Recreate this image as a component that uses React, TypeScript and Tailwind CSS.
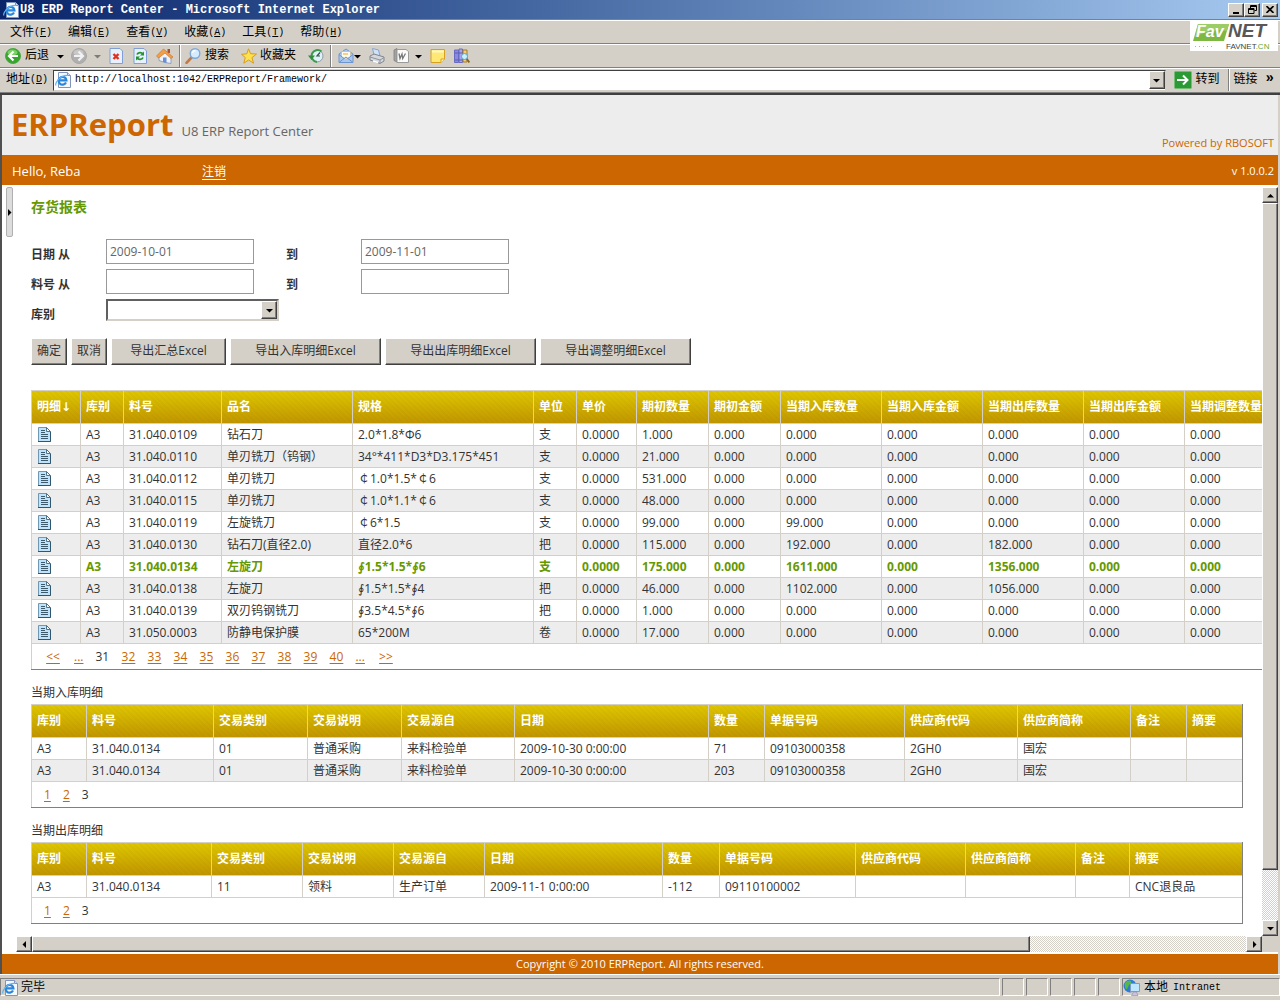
import React, { useState } from 'react';

interface Column {
  title: string;
  width: string;
}

const stockColumns: Column[] = [
  { title: '明细↓', width: 'w-[49px]' },
  { title: '库别', width: 'w-[43px]' },
  { title: '料号', width: 'w-[98px]' },
  { title: '品名', width: 'w-[131px]' },
  { title: '规格', width: 'w-[181px]' },
  { title: '单位', width: 'w-[43px]' },
  { title: '单价', width: 'w-[60px]' },
  { title: '期初数量', width: 'w-[72px]' },
  { title: '期初金额', width: 'w-[72px]' },
  { title: '当期入库数量', width: 'w-[101px]' },
  { title: '当期入库金额', width: 'w-[101px]' },
  { title: '当期出库数量', width: 'w-[101px]' },
  { title: '当期出库金额', width: 'w-[101px]' },
  { title: '当期调整数量', width: 'w-[101px]' },
];

const stockRows = [
  ['A3', '31.040.0109', '钻石刀', '2.0*1.8*Φ6', '支', '0.0000', '1.000', '0.000', '0.000', '0.000', '0.000', '0.000', '0.000'],
  ['A3', '31.040.0110', '单刃铣刀（钨钢）', '34°*411*D3*D3.175*451', '支', '0.0000', '21.000', '0.000', '0.000', '0.000', '0.000', '0.000', '0.000'],
  ['A3', '31.040.0112', '单刃铣刀', '￠1.0*1.5*￠6', '支', '0.0000', '531.000', '0.000', '0.000', '0.000', '0.000', '0.000', '0.000'],
  ['A3', '31.040.0115', '单刃铣刀', '￠1.0*1.1*￠6', '支', '0.0000', '48.000', '0.000', '0.000', '0.000', '0.000', '0.000', '0.000'],
  ['A3', '31.040.0119', '左旋铣刀', '￠6*1.5', '支', '0.0000', '99.000', '0.000', '99.000', '0.000', '0.000', '0.000', '0.000'],
  ['A3', '31.040.0130', '钻石刀(直径2.0)', '直径2.0*6', '把', '0.0000', '115.000', '0.000', '192.000', '0.000', '182.000', '0.000', '0.000'],
  ['A3', '31.040.0134', '左旋刀', '∮1.5*1.5*∮6', '支', '0.0000', '175.000', '0.000', '1611.000', '0.000', '1356.000', '0.000', '0.000'],
  ['A3', '31.040.0138', '左旋刀', '∮1.5*1.5*∮4', '把', '0.0000', '46.000', '0.000', '1102.000', '0.000', '1056.000', '0.000', '0.000'],
  ['A3', '31.040.0139', '双刃钨钢铣刀', '∮3.5*4.5*∮6', '把', '0.0000', '1.000', '0.000', '0.000', '0.000', '0.000', '0.000', '0.000'],
  ['A3', '31.050.0003', '防静电保护膜', '65*200M', '卷', '0.0000', '17.000', '0.000', '0.000', '0.000', '0.000', '0.000', '0.000'],
];

const inColumns: Column[] = [
  { title: '库别', width: 'w-[55px]' },
  { title: '料号', width: 'w-[127px]' },
  { title: '交易类别', width: 'w-[94px]' },
  { title: '交易说明', width: 'w-[94px]' },
  { title: '交易源自', width: 'w-[113px]' },
  { title: '日期', width: 'w-[194px]' },
  { title: '数量', width: 'w-[56px]' },
  { title: '单据号码', width: 'w-[140px]' },
  { title: '供应商代码', width: 'w-[113px]' },
  { title: '供应商简称', width: 'w-[113px]' },
  { title: '备注', width: 'w-[56px]' },
  { title: '摘要', width: 'w-auto' },
];

const inRows = [
  ['A3', '31.040.0134', '01', '普通采购', '来料检验单', '2009-10-30 0:00:00', '71', '09103000358', '2GH0', '国宏', '', ''],
  ['A3', '31.040.0134', '01', '普通采购', '来料检验单', '2009-10-30 0:00:00', '203', '09103000358', '2GH0', '国宏', '', ''],
];

const outColumns: Column[] = [
  { title: '库别', width: 'w-[55px]' },
  { title: '料号', width: 'w-[125px]' },
  { title: '交易类别', width: 'w-[91px]' },
  { title: '交易说明', width: 'w-[91px]' },
  { title: '交易源自', width: 'w-[91px]' },
  { title: '日期', width: 'w-[178px]' },
  { title: '数量', width: 'w-[57px]' },
  { title: '单据号码', width: 'w-[136px]' },
  { title: '供应商代码', width: 'w-[110px]' },
  { title: '供应商简称', width: 'w-[110px]' },
  { title: '备注', width: 'w-[54px]' },
  { title: '摘要', width: 'w-auto' },
];

const outRows = [
  ['A3', '31.040.0134', '11', '领料', '生产订单', '2009-11-1 0:00:00', '-112', '09110100002', '', '', '', 'CNC退良品'],
];

const menus = [
  ['文件', 'F'],
  ['编辑', 'E'],
  ['查看', 'V'],
  ['收藏', 'A'],
  ['工具', 'T'],
  ['帮助', 'H'],
];

/* ---------- icons ---------- */

function IeIcon() {
  return (
    <svg width="16" height="16" viewBox="0 0 16 16" className="shrink-0">
      <path d="M3.5.5h9l3 3v12h-12z" fill="#f4f8ff" stroke="#8094bd" />
      <path d="M12.500 .5v3h3" fill="#cfdcf5" stroke="#8094bd" />
      <path d="M11 10.500A3.900 3.900 0 1 1 11.400 8.300H4" fill="none" stroke="#2b86d9" strokeWidth="2.200" />
      <path d="M1 13.500C-.5 11 5 3.500 12 3.300" fill="none" stroke="#5fb4f0" strokeWidth="1.200" />
    </svg>
  );
}

function BackIcon() {
  return (
    <svg width="16" height="16" viewBox="0 0 16 16" className="shrink-0">
      <circle cx="8" cy="8" r="7.500" fill="#35a52b" stroke="#4aa845" />
      <ellipse cx="7.500" cy="4.500" rx="5" ry="3" fill="#7cd066" />
      <path d="M8.500 3.500L4 8l4.500 4.500M4.500 8H13" fill="none" stroke="#fff" strokeWidth="2.200" />
    </svg>
  );
}

function ForwardIcon() {
  return (
    <svg width="16" height="16" viewBox="0 0 16 16" className="shrink-0">
      <circle cx="8" cy="8" r="7.500" fill="#b0b0b0" stroke="#a6a6a6" />
      <ellipse cx="7.500" cy="4.500" rx="5" ry="3" fill="#c8c8c8" />
      <path d="M7.500 3.500L12 8l-4.500 4.500M11.500 8H3" fill="none" stroke="#f2f2f2" strokeWidth="2.200" />
    </svg>
  );
}

function StopIcon() {
  return (
    <svg width="16" height="16" viewBox="0 0 16 16" className="shrink-0">
      <path d="M2 .5h10l2.500 2.500v12.500H2z" fill="#e6f0ff" stroke="#7f9fd6" />
      <path d="M5.500 6l5 5M10.500 6l-5 5" stroke="#e0301e" strokeWidth="2.400" />
    </svg>
  );
}

function RefreshIcon() {
  return (
    <svg width="16" height="16" viewBox="0 0 16 16" className="shrink-0">
      <path d="M2 .5h10l2.500 2.500v12.500H2z" fill="#e6f0ff" stroke="#7f9fd6" />
      <path d="M5 6.500C6 4 9.500 4 11 6M11 9.500c-1 2.500-4.500 2.500-6 .5" fill="none" stroke="#23932b" strokeWidth="1.800" />
      <path d="M12 3.500v4H8zM4 12.500v-4h4z" fill="#23932b" />
    </svg>
  );
}

function HomeIcon() {
  return (
    <svg width="18" height="16" viewBox="0 0 18 16" className="shrink-0">
      <path d="M11.500 1h2.500v4h-2.500z" fill="#b0502a" />
      <path d="M3 7.500L9 3l6 5v7.500l-6-1-6-2z" fill="#eef3fb" stroke="#8ba0c2" />
      <path d="M.5 8L7.500 1l9.500 8-2 1.500L9 5l-6.500 5z" fill="#f0a04b" stroke="#cf7526" strokeWidth=".7" />
      <path d="M7 9.500h3.500V15L7 14z" fill="#6a8fd0" />
    </svg>
  );
}

function SearchIcon() {
  return (
    <svg width="16" height="16" viewBox="0 0 16 16" className="shrink-0">
      <path d="M6.500 9.500L1.500 14.800" stroke="#c07a43" strokeWidth="2.600" strokeLinecap="round" />
      <circle cx="10" cy="5.500" r="4.800" fill="#d5ecff" stroke="#7fa9da" strokeWidth="1.400" />
      <path d="M7.500 5a3 3 0 0 1 3-2.500" stroke="#fff" strokeWidth="1.300" fill="none" />
    </svg>
  );
}

function StarIcon() {
  return (
    <svg width="16" height="16" viewBox="0 0 16 16" className="shrink-0">
      <path d="M7.500.8l2 4.900 6 .3-4.600 3.700 1.700 5.500-5-3.200-4.800 3.200 1.500-5.600L.5 6.300l5.300-.5z" fill="#ffe14d" stroke="#d79c1c" />
    </svg>
  );
}

function HistoryIcon() {
  return (
    <svg width="16" height="16" viewBox="0 0 16 16" className="shrink-0">
      <circle cx="9" cy="8" r="6" fill="#dff0f7" stroke="#8d9ea6" />
      <path d="M13.500 3.500A6 6 0 1 0 9 14" fill="none" stroke="#3a9b4a" strokeWidth="2" />
      <path d="M0 7.500h7L3.500 12z" fill="#2d8f3e" />
      <path d="M12 4.500L9 8h3" fill="none" stroke="#33554a" strokeWidth="1.200" />
    </svg>
  );
}

function MailIcon() {
  return (
    <svg width="16" height="16" viewBox="0 0 16 16" className="shrink-0">
      <path d="M1 6l7-5 7 5v8.500H1z" fill="#a9c8f0" stroke="#6e95cd" />
      <path d="M3.500 3.500h9V9L8 11 3.500 9z" fill="#fffbe8" stroke="#c6b89a" strokeWidth=".7" />
      <path d="M1 14.500L8 9l7 5.500M1 6.500l5 4M15 6.500l-5 4" fill="none" stroke="#6e95cd" />
      <path d="M5 6h5" stroke="#e8a53a" />
    </svg>
  );
}

function PrintIcon() {
  return (
    <svg width="16" height="16" viewBox="0 0 16 16" className="shrink-0">
      <path d="M3.500.5l6 1.500L11 8 5 7z" fill="#cfe2fa" stroke="#87a4cb" />
      <path d="M1 8l4-2 10 3v4l-4 2.500L1 12z" fill="#d4d7dc" stroke="#80868f" />
      <path d="M1 9l10 3 4-2.500M11 12v3" fill="none" stroke="#8d939c" />
      <path d="M4 13l5 1.500" stroke="#fff" strokeWidth="1.500" />
    </svg>
  );
}

function WordIcon() {
  return (
    <svg width="16" height="16" viewBox="0 0 16 16" className="shrink-0">
      <path d="M1 2l3-1.500V14L1 12.500z" fill="#a3a3a3" stroke="#777" strokeWidth=".7" />
      <path d="M4 1.500h9l2.500 2v11H4z" fill="#fbfbfb" stroke="#9b9b9b" />
      <path d="M6 5.500l1 5 2-4.500.7 4.500 2.800-5" fill="none" stroke="#777" strokeWidth="1.300" />
    </svg>
  );
}

function NoteIcon() {
  return (
    <svg width="16" height="16" viewBox="0 0 16 16" className="shrink-0">
      <path d="M1 1.500h13.500V11L11 14.500H1z" fill="#ffe873" stroke="#d6a021" />
      <path d="M14.500 11H11v3.500" fill="#fff6bf" stroke="#d6a021" />
      <path d="M2 3.500h12" stroke="#fff8cc" strokeWidth="2" />
    </svg>
  );
}

function BooksIcon() {
  return (
    <svg width="16" height="16" viewBox="0 0 16 16" className="shrink-0">
      <path d="M.5 2h4v12.500h-4z" fill="#8a8ae0" stroke="#6a6ac0" />
      <path d="M5 1h3.500v13.500H5z" fill="#a4a4ea" stroke="#6a6ac0" />
      <path d="M1 5h7M1 12h7" stroke="#5c5cb4" />
      <path d="M9 2h4v12H9z" fill="#f1cf77" stroke="#a27b2b" />
      <circle cx="10.500" cy="8.500" r="3" fill="#c9efff" stroke="#5b9ec5" />
      <path d="M12.800 11l2.500 3.500" stroke="#8b6420" strokeWidth="2" />
    </svg>
  );
}

function GoIcon() {
  return (
    <svg width="18" height="18" viewBox="0 0 18 18" className="shrink-0">
      <rect x=".5" y=".5" width="17" height="17" rx="1" fill="#2b9a35" stroke="#76bd74" />
      <path d="M3 9h10M9 4.500L13.500 9 9 13.500" fill="none" stroke="#fff" strokeWidth="2" />
    </svg>
  );
}

function NetworkIcon() {
  return (
    <svg width="18" height="18" viewBox="0 0 18 18" className="shrink-0">
      <circle cx="7" cy="7" r="6.500" fill="#2f7bd6" />
      <path d="M2 4c2-3 5-3 6-2s-1 3-2 4-1 3-2 4-3-3-2-6z" fill="#55b948" />
      <path d="M7.500 4.500h9v8h-9z" fill="#bfe6ff" stroke="#7d9cc4" />
      <path d="M10.500 13h3l1.500 3.500H8.500z" fill="#c9c3df" stroke="#8c86a8" strokeWidth=".6" />
    </svg>
  );
}

function DocIcon() {
  return (
    <svg width="15" height="15" viewBox="0 0 15 15" className="block">
      <path d="M1.500.5h8l4 4v10h-12z" fill="#bfe3fb" stroke="#6f98b3" />
      <path d="M9.500.5v4h4z" fill="#f2faff" stroke="#4f7388" />
      <path d="M13.500 5v9.500H1" fill="none" stroke="#2f5770" />
      <path d="M4 3.500h4M4 5.500h4M4 7.500h7M4 9.500h7M4 11.500h7" stroke="#3c5a6c" />
    </svg>
  );
}

function Triangle({ dir }: { dir: 'up' | 'down' | 'left' | 'right' }) {
  const paths = { down: 'M0 2h7L3.500 5.500z', up: 'M0 5.500h7L3.500 2z', left: 'M5 0v7L1.500 3.500z', right: 'M2 0v7l3.500-3.500z' };
  return (
    <svg width="7" height="7" viewBox="0 0 7 7" className="shrink-0">
      <path d={paths[dir]} fill="#000" />
    </svg>
  );
}

function FavnetLogo() {
  return (
    <svg width="90" height="31" viewBox="0 0 90 31" className="absolute top-[20px] right-0">
      <rect width="88" height="31" fill="#fff" />
      <path d="M8 4h31l-5 17H3z" fill="#7db843" />
      <path d="M8 4h31l-2 7C25 9 15 12 5 17z" fill="#9ccc66" />
      <text x="6" y="17" fontFamily="Liberation Sans, sans-serif" fontSize="16" fontWeight="bold" fontStyle="italic" fill="#fff">Fav</text>
      <text x="38" y="17" fontFamily="Liberation Sans, sans-serif" fontSize="19" fontWeight="bold" fontStyle="italic" fill="#585858">NET</text>
      <path d="M5 26.500h20" stroke="#9ccc66" strokeDasharray="1 3" />
      <text x="36" y="29" fontFamily="Liberation Sans, sans-serif" fontSize="8" fill="#444">
        FAVNET<tspan fill="#6aa82e">.CN</tspan>
      </text>
    </svg>
  );
}

/* ---------- small parts ---------- */

const raised = 'border border-t-white border-l-white border-r-[#404040] border-b-[#404040] bg-[#d4d0c8] shadow-[inset_-1px_-1px_0_#808080]';
const track = 'bg-[conic-gradient(#fff_25%,#d4d0c8_0_50%,#fff_0_75%,#d4d0c8_0)] bg-[length:2px_2px]';

function Separator() {
  return <span className="h-[22px] w-[2px] border-l border-[#808080] border-r border-r-white" />;
}

function ScrollButton({ dir }: { dir: 'up' | 'down' | 'left' | 'right' }) {
  return (
    <button aria-label={`scroll ${dir}`} className={`flex size-4 shrink-0 items-center justify-center ${raised}`}>
      <Triangle dir={dir} />
    </button>
  );
}

function Pager({ pages, current }: { pages: string[]; current: string }) {
  const pageWidth = (page: string) => {
    if (page === '<<' || page === '>>') return 'w-[18px]';
    return page.length === 2 ? 'w-[14px]' : '';
  };

  return (
    <div className="flex h-[25px] items-center gap-3 pl-3 leading-4">
      {pages.map((page, i) =>
        page === current ? (
          <span key={i} className={pageWidth(page)}>{page}</span>
        ) : (
          <a key={i} href="#" className={`text-center text-[#cc6600] underline underline-offset-2 ${pageWidth(page)}`}>
            {page}
          </a>
        )
      )}
    </div>
  );
}

interface GridProps {
  columns: Column[];
  rows: React.ReactNode[][];
  pages: string[];
  current: string;
  selected?: number;
  className: string;
}

function DataGrid({ columns, rows, pages, current, selected, className }: GridProps) {
  return (
    <table className={`table-fixed border-separate border-spacing-0 border-r border-b border-[#808080] ${className}`}>
      <thead>
        <tr className="h-[33px] bg-[repeating-linear-gradient(45deg,transparent_0_2px,rgba(120,80,0,0.04)_2px_4px),linear-gradient(#e0c800,#c09600)] text-white">
          {columns.map((col) => (
            <th key={col.title} className={`overflow-hidden border-t border-l border-[#d4d0c8] px-[5px] py-0 text-left leading-5 font-bold whitespace-nowrap ${col.width}`}>
              {col.title}
            </th>
          ))}
        </tr>
      </thead>
      <tbody>
        {rows.map((row, i) => (
          <tr key={i} className={`h-[22px] ${i % 2 ? 'bg-[#ededed]' : 'bg-white'} ${i === selected ? 'font-bold text-[#669900]' : ''}`}>
            {row.map((cell, j) => (
              <td key={j} className="border-t border-l border-[#d4d0c8] px-[5px] py-0 leading-5 whitespace-nowrap">
                {cell}
              </td>
            ))}
          </tr>
        ))}
        <tr>
          <td colSpan={columns.length} className="border-t border-l border-[#d4d0c8] p-0">
            <Pager pages={pages} current={current} />
          </td>
        </tr>
      </tbody>
    </table>
  );
}

/* ---------- browser window ---------- */

function BrowserBar() {
  const [url, setUrl] = useState('http://localhost:1042/ERPReport/Framework/');

  return (
    <div className="relative shrink-0 bg-[#d4d0c8] font-['Liberation_Mono','Noto_Sans_CJK_SC',monospace] text-xs text-black">
      <div className="flex h-[19px] items-center bg-linear-to-r from-[#0a246a] to-[#a6caf0] pr-[2px] pl-[3px]">
        <IeIcon />
        <h1 className="ml-px flex-1 text-xs font-bold text-white">U8 ERP Report Center - Microsoft Internet Explorer</h1>
        <button aria-label="minimize" className={`flex h-[14px] w-4 items-end justify-center pb-[2px] ${raised}`}>
          <span className="h-[2px] w-[6px] bg-black" />
        </button>
        <button aria-label="restore" className={`flex h-[14px] w-4 items-center justify-center ${raised}`}>
          <svg width="9" height="9" viewBox="0 0 9 9">
            <path d="M2.500 3V.5h6v5H6.500M2.500 1.500h6M.5 3.500h5.500v5H.5zM.5 4.500h5.500" fill="none" stroke="#000" />
          </svg>
        </button>
        <button aria-label="close" className={`ml-[2px] flex h-[14px] w-4 items-center justify-center ${raised}`}>
          <svg width="8" height="7" viewBox="0 0 8 7">
            <path d="M.5 0l7 7M7.500 0l-7 7" stroke="#000" strokeWidth="1.600" />
          </svg>
        </button>
      </div>

      <nav className="flex h-[25px] items-center gap-4 border-t border-b border-[#808080] pt-[2px] pl-[10px] shadow-[inset_0_1px_0_#fff]">
        {menus.map(([name, key]) => (
          <button key={key} className="flex items-center leading-4">
            {name}
            <span className="text-[10px]">
              (<u>{key}</u>)
            </span>
          </button>
        ))}
      </nav>

      <div className="flex h-6 items-center border-b border-[#808080] pt-px pl-[5px] leading-4 shadow-[inset_0_1px_0_#fff]">
        <button className="flex items-center gap-1">
          <BackIcon />
          后退
        </button>
        <span className="ml-2"><Triangle dir="down" /></span>
        <button aria-label="forward" className="ml-[7px]"><ForwardIcon /></button>
        <span className="ml-[7px] opacity-40"><Triangle dir="down" /></span>
        <button aria-label="stop" className="ml-[7px]"><StopIcon /></button>
        <button aria-label="refresh" className="ml-2"><RefreshIcon /></button>
        <button aria-label="home" className="mr-[5px] ml-2"><HomeIcon /></button>
        <Separator />
        <button className="ml-1 flex items-center gap-1">
          <SearchIcon />
          搜索
        </button>
        <button className="ml-3 flex items-center gap-[3px]">
          <StarIcon />
          收藏夹
        </button>
        <button aria-label="history" className="mr-[6px] ml-3"><HistoryIcon /></button>
        <Separator />
        <button aria-label="mail" className="ml-[6px]"><MailIcon /></button>
        <Triangle dir="down" />
        <button aria-label="print" className="ml-2"><PrintIcon /></button>
        <button aria-label="edit" className="ml-2"><WordIcon /></button>
        <span className="ml-[6px]"><Triangle dir="down" /></span>
        <button aria-label="discuss" className="ml-2"><NoteIcon /></button>
        <button aria-label="research" className="ml-2"><BooksIcon /></button>
      </div>

      <div className="flex h-[25px] items-center border-b border-[#808080] pl-[6px] leading-4 shadow-[inset_0_1px_0_#fff]">
        <label htmlFor="url" className="flex w-[47px] items-center">
          地址
          <span className="text-[10px]">
            (<u>D</u>)
          </span>
        </label>
        <div className="flex h-[21px] flex-1 items-center gap-1 border border-t-[#404040] border-r-[#d4d0c8] border-b-[#d4d0c8] border-l-[#404040] bg-white pl-px">
          <IeIcon />
          <input id="url" value={url} onChange={(e) => setUrl(e.target.value)} className="h-4 min-w-0 flex-1 text-[10px] outline-none" />
          <button aria-label="history list" className={`flex h-[18px] w-4 items-center justify-center ${raised}`}>
            <Triangle dir="down" />
          </button>
        </div>
        <button className="mr-2 ml-2 flex items-center gap-1">
          <GoIcon />
          转到
        </button>
        <Separator />
        <button className="mr-[6px] ml-1 flex items-center gap-2">
          链接
          <span className="pb-1 text-sm font-bold">»</span>
        </button>
      </div>
      <div className="h-[2px] bg-[#404040]" />
      <FavnetLogo />
    </div>
  );
}

function StatusBar() {
  const pane = 'border border-t-[#808080] border-l-[#808080] border-r-white border-b-white';
  return (
    <div className="flex h-[26px] shrink-0 items-start gap-[2px] border-t border-white bg-[#d4d0c8] pt-[3px] font-['Liberation_Mono','Noto_Sans_CJK_SC',monospace] text-xs leading-4 text-black">
      <div className={`flex h-[18px] flex-1 items-center gap-[3px] pt-px pl-px ${pane}`}>
        <IeIcon />
        完毕
      </div>
      {[1, 2, 3, 4, 5].map((n) => (
        <div key={n} className={`h-[18px] w-[22px] ${pane}`} />
      ))}
      <div className={`flex h-[18px] w-[158px] items-center gap-[3px] pt-px ${pane}`}>
        <NetworkIcon />
        本地
        <span className="ml-[2px] text-[10px]">Intranet</span>
      </div>
    </div>
  );
}

/* ---------- report ---------- */

function FilterForm() {
  const [filter, setFilter] = useState({ from: '2009-10-01', to: '2009-11-01', itemFrom: '', itemTo: '' });
  const label = 'pt-px leading-[30px] font-bold';
  const box = 'h-[25px] w-[148px] border border-[#999] bg-white px-[3px] text-xs text-[#666] outline-none';
  const button = `h-[27px] pb-[2px] text-[#333] ${raised}`;

  return (
    <form onSubmit={(e) => e.preventDefault()}>
      <div className="mt-3 grid auto-rows-[30px] grid-cols-[75px_180px_75px_148px] items-start">
        <label htmlFor="from" className={label}>日期 从</label>
        <input id="from" className={box} value={filter.from} onChange={(e) => setFilter({ ...filter, from: e.target.value })} />
        <label htmlFor="to" className={label}>到</label>
        <input id="to" className={box} value={filter.to} onChange={(e) => setFilter({ ...filter, to: e.target.value })} />

        <label htmlFor="itemFrom" className={label}>料号 从</label>
        <input id="itemFrom" className={box} value={filter.itemFrom} onChange={(e) => setFilter({ ...filter, itemFrom: e.target.value })} />
        <label htmlFor="itemTo" className={label}>到</label>
        <input id="itemTo" className={box} value={filter.itemTo} onChange={(e) => setFilter({ ...filter, itemTo: e.target.value })} />

        <label htmlFor="store" className={label}>库别</label>
        <div className="relative w-[173px]">
          <select id="store" className="block h-[22px] w-full appearance-none border-2 border-t-[#606060] border-r-[#d4d0c8] border-b-[#d4d0c8] border-l-[#606060] bg-white px-1 outline-none">
            <option value=""></option>
          </select>
          <span className={`pointer-events-none absolute top-[2px] right-[2px] flex h-[18px] w-4 items-center justify-center ${raised}`}>
            <Triangle dir="down" />
          </span>
        </div>
      </div>
      <div className="mt-[9px] flex gap-1">
        <button className={`w-9 ${button}`}>确定</button>
        <button className={`w-9 ${button}`}>取消</button>
        <button className={`w-[115px] ${button}`}>导出汇总Excel</button>
        <button className={`w-[151px] ${button}`}>导出入库明细Excel</button>
        <button className={`w-[151px] ${button}`}>导出出库明细Excel</button>
        <button className={`w-[151px] ${button}`}>导出调整明细Excel</button>
      </div>
    </form>
  );
}

export default function App() {
  const stock = stockRows.map((row) => [<DocIcon key="doc" />, ...row]);

  return (
    <div className="flex h-screen flex-col overflow-hidden bg-white font-['Open_Sans','DejaVu_Sans','Noto_Sans_CJK_SC',sans-serif] text-xs text-[#333]">
      <BrowserBar />

      <div className="flex min-h-0 flex-1 flex-col border-r-2 border-l-2 border-r-[#d4d0c8] border-l-[#505050]">
        <header className="flex h-[60px] shrink-0 items-end justify-between bg-[#ededed] pr-1 pl-[9px]">
          <div className="flex items-baseline gap-2 pb-[11px]">
            <span className="text-[31px] leading-10 font-bold text-[#cc6600]">ERPReport</span>
            <span className="text-[13px] text-[#666]">U8 ERP Report Center</span>
          </div>
          <span className="pb-1 text-[11px] leading-4 text-[#cc6600]">Powered by RBOSOFT</span>
        </header>
        <div className="flex h-[30px] shrink-0 items-center bg-[#cc6600] pt-[3px] pr-1 pl-[10px] text-white">
          <span className="w-[190px] text-[13px]">Hello, Reba</span>
          <a href="#" className="underline underline-offset-3">注销</a>
          <span className="ml-auto text-[11px]">v 1.0.0.2</span>
        </div>

        <div className="flex min-h-0 flex-1 py-[2px]">
          <button aria-label="expand" className="mr-[3px] ml-1 flex h-[50px] w-[7px] shrink-0 items-center justify-center rounded-xs border border-[#b0b0b0] bg-[#dcdcdc]">
            <Triangle dir="right" />
          </button>
          <div className="flex min-w-0 flex-1 flex-col">
            <main className="min-h-0 flex-1 overflow-auto pr-[19px] pl-[15px] [scrollbar-width:none]">
              <h2 className="text-sm leading-10 font-bold text-[#669900]">存货报表</h2>
              <FilterForm />

              <DataGrid
                className="mt-[25px] w-[1255px]"
                columns={stockColumns}
                rows={stock}
                selected={6}
                pages={['<<', '...', '31', '32', '33', '34', '35', '36', '37', '38', '39', '40', '...', '>>']}
                current="31"
              />

              <h3 className="mt-3 leading-[22px]">当期入库明细</h3>
              <DataGrid className="w-full" columns={inColumns} rows={inRows} pages={['1', '2', '3']} current="3" />

              <h3 className="mt-3 leading-[22px]">当期出库明细</h3>
              <DataGrid className="w-full" columns={outColumns} rows={outRows} pages={['1', '2', '3']} current="3" />
            </main>
            <div className={`flex h-4 shrink-0 ${track}`}>
              <ScrollButton dir="left" />
              <div className={`flex-[998] ${raised}`} />
              <div className="flex-[216]" />
              <ScrollButton dir="right" />
            </div>
          </div>
          <div className="flex w-4 shrink-0 flex-col bg-[#d4d0c8] pb-4">
            <div className={`flex flex-1 flex-col ${track}`}>
              <ScrollButton dir="up" />
              <div className={`flex-[667] ${raised}`} />
              <div className="flex-[50]" />
              <ScrollButton dir="down" />
            </div>
          </div>
        </div>

        <footer className="h-5 shrink-0 bg-[#cc6600] text-center text-[11px] leading-5 text-white">Copyright © 2010 ERPReport. All rights reserved.</footer>
      </div>

      <StatusBar />
    </div>
  );
}
